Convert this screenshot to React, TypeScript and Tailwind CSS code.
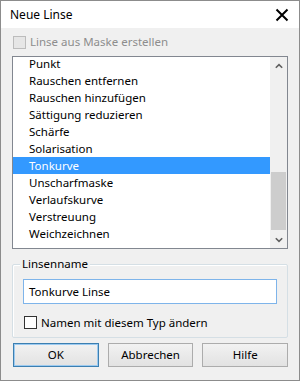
import React from "react";

const items = [
  "Punkt",
  "Rauschen entfernen",
  "Rauschen hinzufügen",
  "Sättigung reduzieren",
  "Schärfe",
  "Solarisation",
  "Tonkurve",
  "Unscharfmaske",
  "Verlaufskurve",
  "Verstreuung",
  "Weichzeichnen",
];

function Btn({ label, primary }: { label: string; primary?: boolean }) {
  return (
    <button
      className={`flex h-[24px] w-[86px] items-center justify-center border bg-gradient-to-b from-[#f2f2f2] to-[#e2e2e2] text-black ${
        primary ? "border-[#3c7fb1] shadow-[inset_0_0_0_1px_#9ccaf0]" : "border-[#acacac]"
      }`}
    >
      {label}
    </button>
  );
}

export default function App() {
  return (
    <div
      className="flex h-[381px] w-[300px] flex-col border border-[#8c8c8c] bg-white text-[11.5px] text-black"
      style={{ fontFamily: '"Noto Sans", "Segoe UI", sans-serif' }}
    >
      {/* title bar */}
      <div className="flex h-[27px] shrink-0 items-center justify-between pl-[9px] pr-[8px]">
        <span className="text-[12px] leading-none">Neue Linse</span>
        <svg width="14" height="14" viewBox="0 0 14 14" className="mr-[2px]">
          <path d="M1.5 1.5 L12.5 12.5 M12.5 1.5 L1.5 12.5" stroke="#000" strokeWidth="2" />
        </svg>
      </div>

      <div className="flex flex-1 flex-col bg-[#f0f0f0] px-[11px] pt-[6px]">
        {/* disabled checkbox */}
        <label className="flex h-[16px] items-center gap-[4px] pl-[1px]">
          <span className="h-[13px] w-[13px] border border-[#bcbcbc] bg-[#e6e6e6]" />
          <span className="text-[#8d8d8d]">Linse aus Maske erstellen</span>
        </label>

        {/* list box */}
        <div className="mt-[6px] flex h-[193px] border border-[#828790] bg-white">
          <div className="relative flex-1 overflow-hidden">
            <div className="absolute left-0 right-0 top-[-2px]">
              {items.map((it) => (
                <div
                  key={it}
                  className={`flex h-[17px] items-center pl-[16px] leading-[15px] ${
                    it === "Tonkurve" ? "bg-[#3399ff] text-white" : ""
                  }`}
                >
                  {it}
                </div>
              ))}
            </div>
          </div>
          <div className="flex w-[17px] flex-col bg-[#f0f0f0]">
            <div className="flex h-[17px] items-center justify-center">
              <svg width="8" height="6" viewBox="0 0 8 6">
                <path d="M0.8 4.8 L4 1.6 L7.2 4.8" stroke="#606060" strokeWidth="1.6" fill="none" />
              </svg>
            </div>
            <div className="flex-1 px-[1px]">
              <div className="mt-[98px] h-[58px] bg-[#cdcdcd]" />
            </div>
            <div className="flex h-[17px] items-center justify-center">
              <svg width="8" height="6" viewBox="0 0 8 6">
                <path d="M0.8 1.2 L4 4.4 L7.2 1.2" stroke="#606060" strokeWidth="1.6" fill="none" />
              </svg>
            </div>
          </div>
        </div>

        {/* group box */}
        <div className="relative mt-[15px] h-[74px] rounded-[2px] border border-[#d5dfe5] shadow-[inset_1px_1px_0_#fff]">
          <span className="absolute left-[7px] top-[-9px] bg-[#f0f0f0] px-[2px] leading-[16px]">
            Linsenname
          </span>
          <div className="mx-[10px] mt-[14px] flex h-[25px] items-center border border-[#7eb4ea] bg-white pl-[5px]">
            Tonkurve Linse
          </div>
          <label className="ml-[11px] mt-[10px] flex items-center gap-[4px]">
            <span className="h-[13px] w-[13px] border border-[#333] bg-white" />
            <span>Namen mit diesem Typ ändern</span>
          </label>
        </div>

        {/* buttons */}
        <div className="mt-[5px] flex gap-[9px] pl-[1px]">
          <Btn label="OK" primary />
          <Btn label="Abbrechen" />
          <Btn label="Hilfe" />
        </div>
      </div>
    </div>
  );
}
